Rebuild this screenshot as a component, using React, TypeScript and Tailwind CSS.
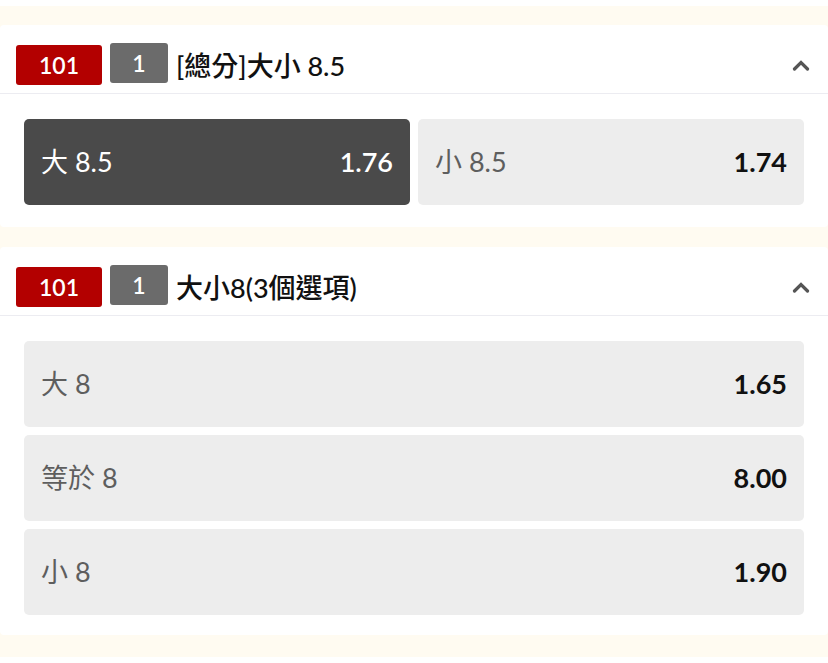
import React from "react";

type Option = { label: string; odds: string; active?: boolean };

const font = { fontFamily: '"Lato", "Noto Sans CJK TC", sans-serif' };

function Chevron() {
  return (
    <svg width="18" height="12" viewBox="0 0 18 12" className="shrink-0">
      <path d="M2.5 10 L9 3.5 L15.5 10" fill="none" stroke="#555" strokeWidth="3.2" strokeLinecap="round" strokeLinejoin="miter" />
    </svg>
  );
}

function OptionBox({ o, stretch }: { o: Option; stretch: boolean }) {
  const base = "flex h-[86px] shrink-0 items-center justify-between rounded-[5px] px-[17px] " + (stretch ? "flex-1" : "w-full");
  return (
    <div className={o.active ? base + " bg-[#4a4a4a]" : base + " bg-[#ededed]"}>
      <span className={o.active ? "text-[27px] text-white" : "text-[27px] text-[#5e5e5e]"}>{o.label}</span>
      <span className={o.active ? "text-[27px] font-semibold text-white" : "text-[27px] font-bold text-[#111]"}>{o.odds}</span>
    </div>
  );
}

function Market({ title, options, grid }: { title: string; options: Option[]; grid: "row" | "col" }) {
  return (
    <section className="rounded-[4px] bg-white">
      <div className="flex items-center px-4 pt-5 pb-2 border-b border-[#ececf1]">
        <span className="flex h-10 w-[86px] items-center justify-center rounded-[3px] bg-[#b30000] text-[23px] font-semibold text-white">101</span>
        <span className="ml-2 -mt-1 flex h-10 w-[58px] items-center justify-center rounded-[3px] bg-[#6b6b6b] text-[23px] font-semibold text-white">1</span>
        <h2 className="ml-2 flex-1 text-[27px] font-medium leading-none text-[#111]">{title}</h2>
        <span className="mr-[2px]"><Chevron /></span>
      </div>
      <div className={grid === "row" ? "flex gap-2 px-6 pt-[25px] pb-[22px]" : "flex flex-col gap-2 px-6 pt-[25px] pb-5"}>
        {options.map((o) => (
          <OptionBox key={o.label} o={o} stretch={grid === "row"} />
        ))}
      </div>
    </section>
  );
}

export default function App() {
  return (
    <main className="h-[663px] bg-[#fffbf1] overflow-hidden" style={font}>
      <div className="h-[6px] bg-white" />
      <div className="flex flex-col gap-5 pt-[19px]">
        <Market
          title="[總分]大小 8.5"
          grid="row"
          options={[
            { label: "大 8.5", odds: "1.76", active: true },
            { label: "小 8.5", odds: "1.74" },
          ]}
        />
        <Market
          title="大小8(3個選項)"
          grid="col"
          options={[
            { label: "大 8", odds: "1.65" },
            { label: "等於 8", odds: "8.00" },
            { label: "小 8", odds: "1.90" },
          ]}
        />
        <div className="h-[20px] bg-white mt-[2px]" />
      </div>
    </main>
  );
}
